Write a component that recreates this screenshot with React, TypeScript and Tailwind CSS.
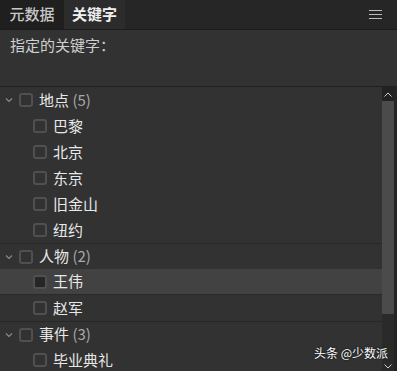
import React from 'react';

type Item = { label: string; selected?: boolean };
type Group = { label: string; count: number; items: Item[] };

const GROUPS: Group[] = [
  { label: '地点', count: 5, items: [{ label: '巴黎' }, { label: '北京' }, { label: '东京' }, { label: '旧金山' }, { label: '纽约' }] },
  { label: '人物', count: 2, items: [{ label: '王伟', selected: true }, { label: '赵军' }] },
  { label: '事件', count: 3, items: [{ label: '毕业典礼' }] },
];

const Box = ({ filled }: { filled?: boolean }) => (
  <span className={`w-[14px] h-[14px] rounded-[3px] border-2 border-[#505050] flex-shrink-0 ${filled ? 'bg-[#262626]' : ''}`} />
);

const Chevron = () => (
  <svg className="w-[8px] h-[8px] flex-shrink-0" viewBox="0 0 8 8" fill="none" stroke="#8a8a8a" strokeWidth={1.2}>
    <path d="M1 2.5l3 3 3-3" />
  </svg>
);

export default function App() {
  return (
    <div
      className="w-[397px] h-[371px] bg-[#323232] flex flex-col overflow-hidden relative"
      style={{ fontFamily: '"Noto Sans CJK SC", "Noto Sans", sans-serif' }}
    >
      {/* Tabs */}
      <div className="h-[30px] bg-[#262626] flex items-stretch border-b border-[#1c1c1c] flex-shrink-0">
        <div className="w-[64px] bg-[#1f1f1f] flex items-center justify-center text-[15px] font-medium text-[#c8c8c8]">元数据</div>
        <div className="w-[61px] bg-[#2c2c2c] flex items-center justify-center text-[15px] font-bold text-[#f0f0f0]">关键字</div>
        <div className="flex-1" />
        <div className="w-[28px] flex items-center">
          <svg className="w-[13px] h-[9px]" viewBox="0 0 13 9" fill="#bdbdbd">
            <rect y="0" width="13" height="1" />
            <rect y="4" width="13" height="1" />
            <rect y="8" width="13" height="1" />
          </svg>
        </div>
      </div>

      {/* Keyword input */}
      <div className="h-[57px] px-[10px] pt-[4px] text-[15px] text-[#cfcfcf] border-b border-[#1f1f1f] flex-shrink-0">
        指定的关键字：
      </div>

      {/* Tree */}
      <div className="flex-1 flex min-h-0">
        <div className="flex-1 overflow-hidden">
          {GROUPS.map((g, gi) => (
            <div key={g.label}>
              <div className={`h-[26px] flex items-center pl-[5px] gap-[6px] ${gi > 0 ? 'border-t border-[#272727]' : ''}`}>
                <Chevron />
                <Box />
                <span className="text-[15px] text-[#e8e8e8]">
                  {g.label}
                  <span className="text-[#a8a8a8]"> ({g.count})</span>
                </span>
              </div>
              {g.items.map(it => (
                <div
                  key={it.label}
                  className={`h-[26px] flex items-center pl-[33px] gap-[6px] ${it.selected ? 'bg-[#424242] border-b border-[#2a2a2a]' : ''}`}
                >
                  <Box filled={it.selected} />
                  <span className="text-[15px] text-[#e8e8e8]">{it.label}</span>
                </div>
              ))}
            </div>
          ))}
        </div>

        {/* Scrollbar */}
        <div className="w-[12px] bg-[#2a2a2a] flex flex-col">
          <div className="h-[14px] bg-[#222] flex items-center justify-center">
            <svg className="w-[8px] h-[5px]" viewBox="0 0 8 5" fill="none" stroke="#cfcfcf" strokeWidth={1}>
              <path d="M0.5 4.5l3.5-3.5 3.5 3.5" />
            </svg>
          </div>
          <div className="h-[213px] bg-[#4b4b4b]" />
          <div className="flex-1" />
          <div className="h-[10px] flex items-center justify-center">
            <svg className="w-[8px] h-[5px]" viewBox="0 0 8 5" fill="none" stroke="#cfcfcf" strokeWidth={1}>
              <path d="M0.5 0.5l3.5 3.5 3.5-3.5" />
            </svg>
          </div>
        </div>
        <div className="w-[3px] bg-[#232323]" />
      </div>

      {/* Watermark */}
      <div className="absolute right-[9px] bottom-[9px] text-[12px] text-white [text-shadow:0_0_2px_#000]">
        头条 @少数派
      </div>
    </div>
  );
}
